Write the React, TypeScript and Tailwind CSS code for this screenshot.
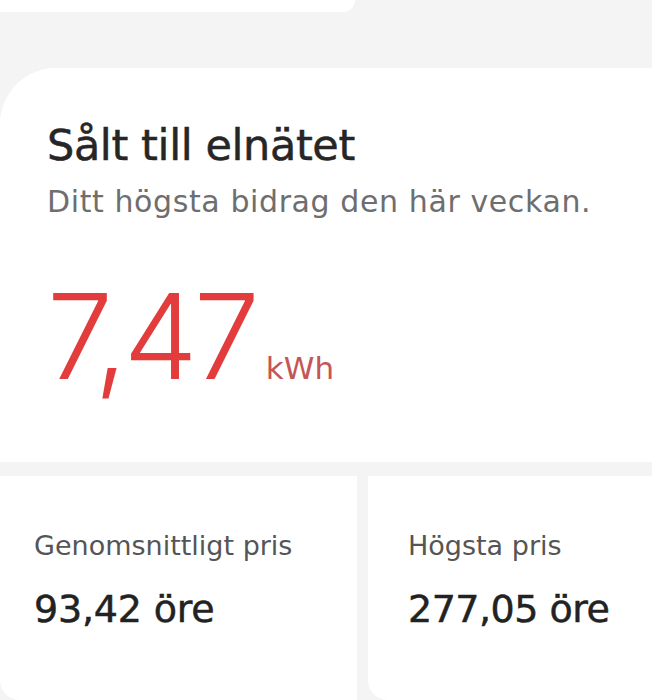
import React from "react";

export default function App() {
  const body = { fontFamily: "'DejaVu Sans', 'Noto Sans', sans-serif" };
  const num = { fontFamily: "Inter, 'Noto Sans', sans-serif" };
  return (
    <div className="w-[652px] h-[700px] bg-[#f4f4f4] overflow-hidden flex flex-col" style={body}>
      <div className="h-[12px] w-[355px] bg-white rounded-br-[28px] shrink-0" />
      <div className="mt-[56px] h-[394px] bg-white rounded-tl-[56px] shrink-0 pl-[47px] pt-[52px]">
        <h1 className="text-[43px] leading-[50px] text-[#262626] tracking-[-0.4px] [-webkit-text-stroke:0.5px_#262626]">Sålt till elnätet</h1>
        <p className="mt-[14px] text-[30px] leading-[36px] text-[#6e6e6e] tracking-[0.6px]">Ditt högsta bidrag den här veckan.</p>
        <div className="mt-[61px] flex items-baseline">
          <span className="text-[118px] leading-[110px] font-light text-[#e23c3c] tracking-[-4px]" style={num}>7,47</span>
          <span className="ml-[10px] text-[31px] leading-[36px] text-[#c65656]">kWh</span>
        </div>
      </div>
      <div className="mt-[14px] flex gap-[11px] flex-1">
        <div className="w-[357px] bg-white rounded-bl-[20px] pl-[34px] pt-[54px]">
          <p className="text-[27px] leading-[32px] text-[#555555]">Genomsnittligt pris</p>
          <p className="mt-[25px] text-[38px] leading-[44px] text-[#222222] tracking-[-0.2px] [-webkit-text-stroke:0.5px_#222222]">93,42 öre</p>
        </div>
        <div className="flex-1 bg-white rounded-bl-[20px] pl-[40px] pt-[54px]">
          <p className="text-[27px] leading-[32px] text-[#555555]">Högsta pris</p>
          <p className="mt-[25px] text-[38px] leading-[44px] text-[#222222] tracking-[-0.5px] [-webkit-text-stroke:0.5px_#222222]">277,05 öre</p>
        </div>
      </div>
    </div>
  );
}
